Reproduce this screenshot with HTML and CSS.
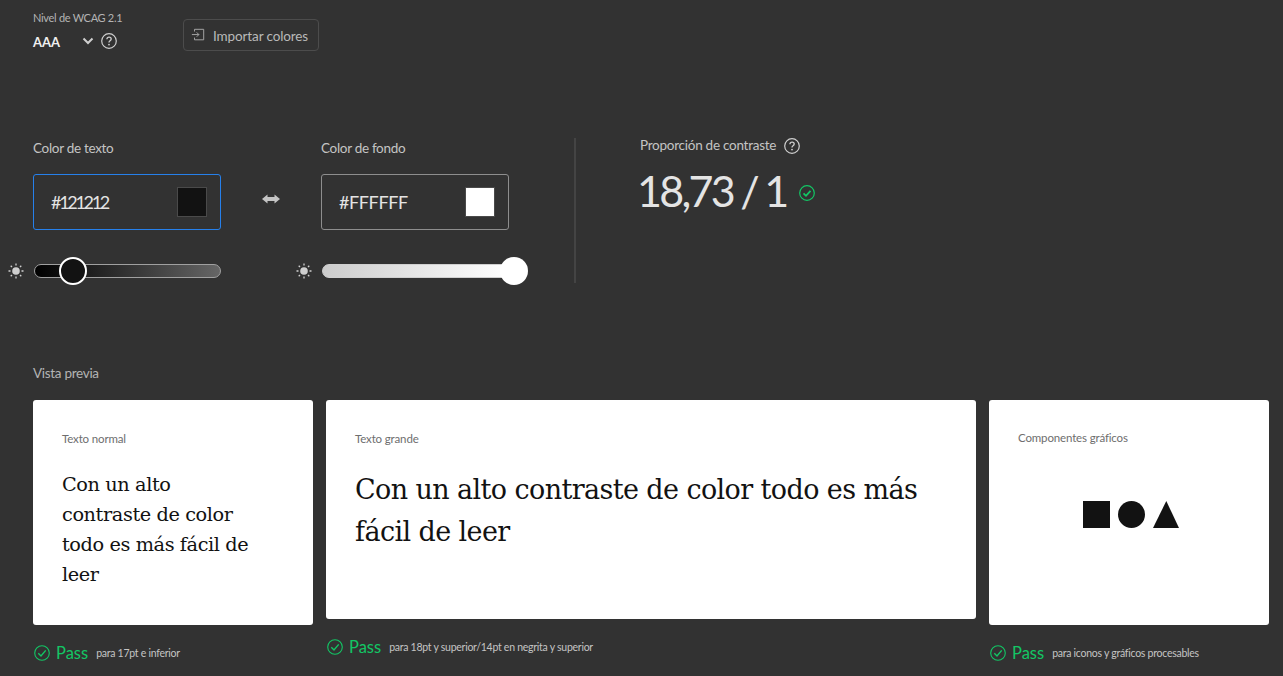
FILE: index.html
```html
<!DOCTYPE html>
<html lang="es">
<head>
    <meta charset="UTF-8">
    <meta name="viewport" content="width=device-width, initial-scale=1.0">
    <title>Comprobador de contraste</title>
    <link rel="stylesheet" href="styles.css">
</head>
<body>
    <header class="top-bar">
        <div class="level">
            <div class="level-label">Nivel de WCAG 2.1</div>
            <div class="level-row">
                <span class="level-value">AAA</span>
                <svg class="chevron" viewBox="0 0 12 8" width="12" height="8"><path d="M1.5 1.5 6 6l4.5-4.500" fill="none" stroke="#cfcfcf" stroke-width="2"/></svg>
                <svg class="help" viewBox="0 0 16 16" width="16" height="16"><circle cx="8" cy="8" r="7.3" fill="none" stroke="#cfcfcf" stroke-width="1.2"/><path d="M5.900 6.200C6 4.900 7 4.200 8.100 4.200c1.200 0 2.100.8 2.100 1.900 0 1.700-2.200 1.700-2.200 3.300" fill="none" stroke="#cfcfcf" stroke-width="1.3"/><circle cx="8" cy="11.6" r=".9" fill="#cfcfcf"/></svg>
            </div>
        </div>
        <button class="import-btn">
            <svg viewBox="0 0 16 16" width="14" height="14"><path d="M4 4V1.500h10.500v12H4V11M1 7.500h8M6.500 5 9 7.500 6.500 10" fill="none" stroke="#a8a8a8" stroke-width="1.1"/></svg>
            <span class="import-text">Importar colores</span>
        </button>
    </header>

    <section class="controls">
        <div class="color-col">
            <label class="field-label">Color de texto</label>
            <div class="color-input active">
                <span class="hex-digits">#121212</span>
                <span class="swatch swatch-dark"></span>
            </div>
            <div class="slider-row">
                <svg class="sun" viewBox="0 0 16 16" width="16" height="16"><circle cx="8" cy="8" r="3.8" fill="#cfcfcf"/><path d="M8 .5v2M8 13.500v2M.5 8h2M13.500 8h2M2.700 2.700 4 4M12 12l1.300 1.300M2.700 13.300 4 12M12 4l1.300-1.300" stroke="#cfcfcf" stroke-width="1.3"/></svg>
                <div class="track track-dark"><span class="thumb thumb-dark"></span></div>
            </div>
        </div>
        <svg class="swap" viewBox="0 0 18 10" width="18" height="10"><path d="M0 5 5.500.5V3h7V.5L18 5l-5.500 4.500V7h-7v2.500z" fill="#c4c4c4"/></svg>
        <div class="color-col">
            <label class="field-label">Color de fondo</label>
            <div class="color-input">
                <span class="hex-letters">#FFFFFF</span>
                <span class="swatch swatch-light"></span>
            </div>
            <div class="slider-row">
                <svg class="sun" viewBox="0 0 16 16" width="16" height="16"><circle cx="8" cy="8" r="3.8" fill="#cfcfcf"/><path d="M8 .5v2M8 13.500v2M.5 8h2M13.500 8h2M2.700 2.700 4 4M12 12l1.300 1.300M2.700 13.300 4 12M12 4l1.300-1.300" stroke="#cfcfcf" stroke-width="1.3"/></svg>
                <div class="track track-light"><span class="thumb thumb-light"></span></div>
            </div>
        </div>
        <div class="ratio">
            <div class="ratio-label">
                Proporción de contraste
                <svg viewBox="0 0 16 16" width="16" height="16"><circle cx="8" cy="8" r="7.3" fill="none" stroke="#cfcfcf" stroke-width="1.2"/><path d="M5.900 6.200C6 4.900 7 4.200 8.100 4.200c1.200 0 2.100.8 2.100 1.900 0 1.700-2.200 1.700-2.200 3.300" fill="none" stroke="#cfcfcf" stroke-width="1.3"/><circle cx="8" cy="11.6" r=".9" fill="#cfcfcf"/></svg>
            </div>
            <div class="ratio-value">
                18,73 / 1
                <svg viewBox="0 0 16 16" width="16" height="16"><circle cx="8" cy="8" r="7.3" fill="none" stroke="#12c765" stroke-width="1.2"/><path d="M4.500 8.300 7 10.800l4.500-5" fill="none" stroke="#12c765" stroke-width="1.8"/></svg>
            </div>
        </div>
    </section>

    <section class="preview">
        <div class="preview-title">Vista previa</div>
        <div class="cards">
            <div class="card-col col-normal">
                <div class="card card-tall">
                    <div class="card-label">Texto normal</div>
                    <p class="sample">Con un alto contraste de color todo es más fácil de leer</p>
                </div>
                <div class="result">
                    <svg viewBox="0 0 16 16" width="16" height="16"><circle cx="8" cy="8" r="7.3" fill="none" stroke="#12c765" stroke-width="1.1"/><path d="M4.300 8.300 7 11l4.700-5.600" fill="none" stroke="#12c765" stroke-width="1.4"/></svg>
                    <span class="pass">Pass</span>
                    <span class="note">para 17pt e inferior</span>
                </div>
            </div>
            <div class="card-col col-large">
                <div class="card card-short">
                    <div class="card-label">Texto grande</div>
                    <p class="sample sample-large">Con un alto contraste de color todo es más fácil de leer</p>
                </div>
                <div class="result">
                    <svg viewBox="0 0 16 16" width="16" height="16"><circle cx="8" cy="8" r="7.3" fill="none" stroke="#12c765" stroke-width="1.1"/><path d="M4.300 8.300 7 11l4.700-5.600" fill="none" stroke="#12c765" stroke-width="1.4"/></svg>
                    <span class="pass">Pass</span>
                    <span class="note">para 18pt y superior/14pt en negrita y superior</span>
                </div>
            </div>
            <div class="card-col col-normal">
                <div class="card card-tall">
                    <div class="card-label card-label-up">Componentes gráficos</div>
                    <div class="shapes">
                        <svg viewBox="0 0 96 28" width="96" height="28">
                            <rect x="0" y="1" width="27" height="27" fill="#121212"/>
                            <circle cx="48.500" cy="14.500" r="13.500" fill="#121212"/>
                            <path d="M83.300 1 96 28H70z" fill="#121212"/>
                        </svg>
                    </div>
                </div>
                <div class="result">
                    <svg viewBox="0 0 16 16" width="16" height="16"><circle cx="8" cy="8" r="7.3" fill="none" stroke="#12c765" stroke-width="1.1"/><path d="M4.300 8.300 7 11l4.700-5.600" fill="none" stroke="#12c765" stroke-width="1.4"/></svg>
                    <span class="pass">Pass</span>
                    <span class="note">para iconos y gráficos procesables</span>
                </div>
            </div>
        </div>
    </section>
</body>
</html>
```

FILE: styles.css
```css
html, body { height: 100%; overflow: hidden; }
body { margin: 0; background: #323232; color: #cfcfcf; font-family: Lato, "Open Sans", sans-serif; padding: 11px 14px 0 33px; box-sizing: border-box; }

.top-bar { display: flex; align-items: flex-start; height: 129px; }
.level { width: 150px; }
.level-label { font-size: 11px; line-height: 13px; color: #b4b4b4; letter-spacing: -0.3px; }
.level-row { display: flex; align-items: center; margin-top: 7px; height: 20px; }
.level-value { font-size: 13px; font-weight: 700; color: #f0f0f0; width: 49px; padding-top: 2px; }
.chevron { margin-right: 7px; }
.help { display: block; }
.import-btn { display: flex; align-items: center; gap: 8px; height: 32px; width: 136px; margin-top: 8px; padding: 0 0 0 7px; background: transparent; border: 1px solid #4c4c4c; border-radius: 4px; color: #b9b9b9; font: 13.5px Lato, sans-serif; letter-spacing: -0.12px; box-sizing: border-box; }
.import-text { padding-top: 2px; }

.controls { display: flex; align-items: flex-start; height: 225px; }
.color-col { width: 188px; }
.field-label { display: block; font-size: 13.5px; line-height: 17px; color: #c4c4c4; letter-spacing: -0.3px; }
.color-input { display: flex; align-items: center; justify-content: space-between; box-sizing: border-box; height: 56px; margin-top: 17px; padding: 0 13px 0 17px; border: 1px solid #8e8e8e; border-radius: 3px; font-size: 18px; color: #e4e4e4; }
.color-input.active { border-color: #2680eb; }
.hex-digits { letter-spacing: -2.3px; }
.hex-letters { letter-spacing: -0.4px; }
.swatch { width: 30px; height: 30px; box-sizing: border-box; border: 1px solid #4a4a4a; }
.swatch-dark { background: #121212; }
.swatch-light { background: #fff; }
.slider-row { position: relative; margin-top: 34px; height: 14px; }
.sun { position: absolute; left: -25px; top: -1px; }
.track { position: relative; height: 14px; margin-left: 1px; box-sizing: border-box; border-radius: 7px; border: 1px solid #a0a0a0; }
.track-dark { background: linear-gradient(to right, #000, #666); }
.track-light { background: linear-gradient(to right, #ccc, #fff); border-color: #d0d0d0; }
.thumb { position: absolute; top: -8px; width: 28px; height: 28px; box-sizing: border-box; border-radius: 50%; }
.thumb-dark { left: 24px; background: #121212; border: 2px solid #fff; }
.thumb-light { right: -20px; background: #fff; }
.swap { margin: 54px 41px 0; flex: none; }

.ratio { margin-left: 65px; padding-left: 64px; border-left: 2px solid #444; height: 145px; margin-top: -2px; }
.ratio-label { display: flex; align-items: center; gap: 8px; font-size: 13.5px; line-height: 17px; color: #c4c4c4; letter-spacing: -0.26px; margin-top: -1px; }
.ratio-value { display: flex; align-items: center; gap: 12px; margin: 8px 0 0 -3px; font-size: 43px; line-height: 58px; color: #e4e4e4; letter-spacing: -2.7px; word-spacing: -1px; }
.ratio-value svg { margin-top: 4px; }

.preview-title { font-size: 13.5px; line-height: 17px; color: #b4b4b4; letter-spacing: -0.3px; }
.cards { display: flex; gap: 13px; margin-top: 18px; }
.card-col { display: flex; flex-direction: column; }
.col-normal { width: 280px; }
.col-large { width: 650px; }
.card { background: #fff; border-radius: 3px; padding: 32px 29px 0; box-sizing: border-box; color: #121212; }
.card-tall { height: 225px; }
.card-short { height: 219px; }
.card-label { font-size: 11.5px; line-height: 14px; color: #6e6e6e; letter-spacing: -0.15px; }
.card-label-up { margin-top: -1px; }
.sample { margin: 24px 0 0; max-width: 195px; font-family: "DejaVu Serif", "Liberation Serif", serif; font-size: 19.3px; line-height: 30px; letter-spacing: -0.4px; }
.sample-large { max-width: none; margin-top: 23px; font-size: 27px; line-height: 42px; letter-spacing: -0.6px; }
.shapes { display: flex; justify-content: center; margin-top: 55px; margin-left: 3px; }
.result { display: flex; align-items: center; margin: 18px 0 0 1px; height: 20px; }
.pass { color: #12c765; font-size: 16.5px; margin-left: 6px; }
.note { font-size: 10.5px; color: #c4c4c4; margin-left: 8px; letter-spacing: -0.26px; }
```
